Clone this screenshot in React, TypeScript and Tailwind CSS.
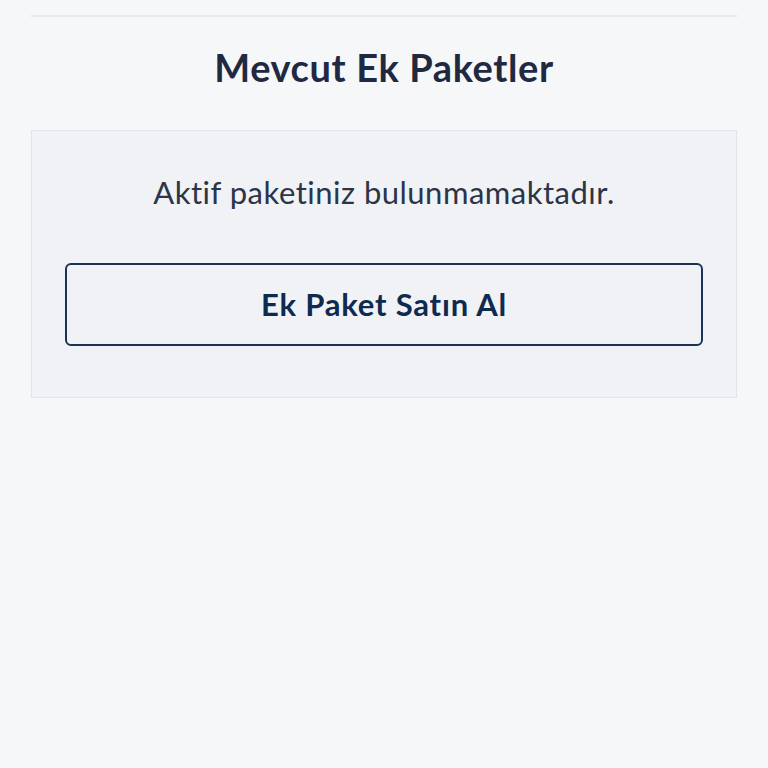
export default function App() {
  return (
    <div className="min-h-[768px] w-full bg-[#f6f7f9] px-[31px] pt-[15px] font-['Lato','Noto_Sans',sans-serif]">
      <div className="h-[2px] w-full bg-[#e6e8eb]" />
      <h2 className="mt-[28px] text-center text-[38px] font-bold leading-[44px] tracking-[0.6px] text-[#1f2941]">
        Mevcut Ek Paketler
      </h2>
      <div className="mt-[41px] flex flex-col border border-[#e0e3e8] bg-[#f0f2f5] px-[33px] pt-[41px] pb-[51px]">
        <p className="text-center text-[31px] leading-[40px] tracking-[0.5px] text-[#2c3448]">
          Aktif paketiniz bulunmamaktadır.
        </p>
        <button
          type="button"
          className="mt-[51px] h-[83px] w-full rounded-[6px] border-2 border-[#1b3356] text-[31px] font-bold tracking-[0.8px] text-[#0f2a4f]"
        >
          Ek Paket Satın Al
        </button>
      </div>
    </div>
  );
}
